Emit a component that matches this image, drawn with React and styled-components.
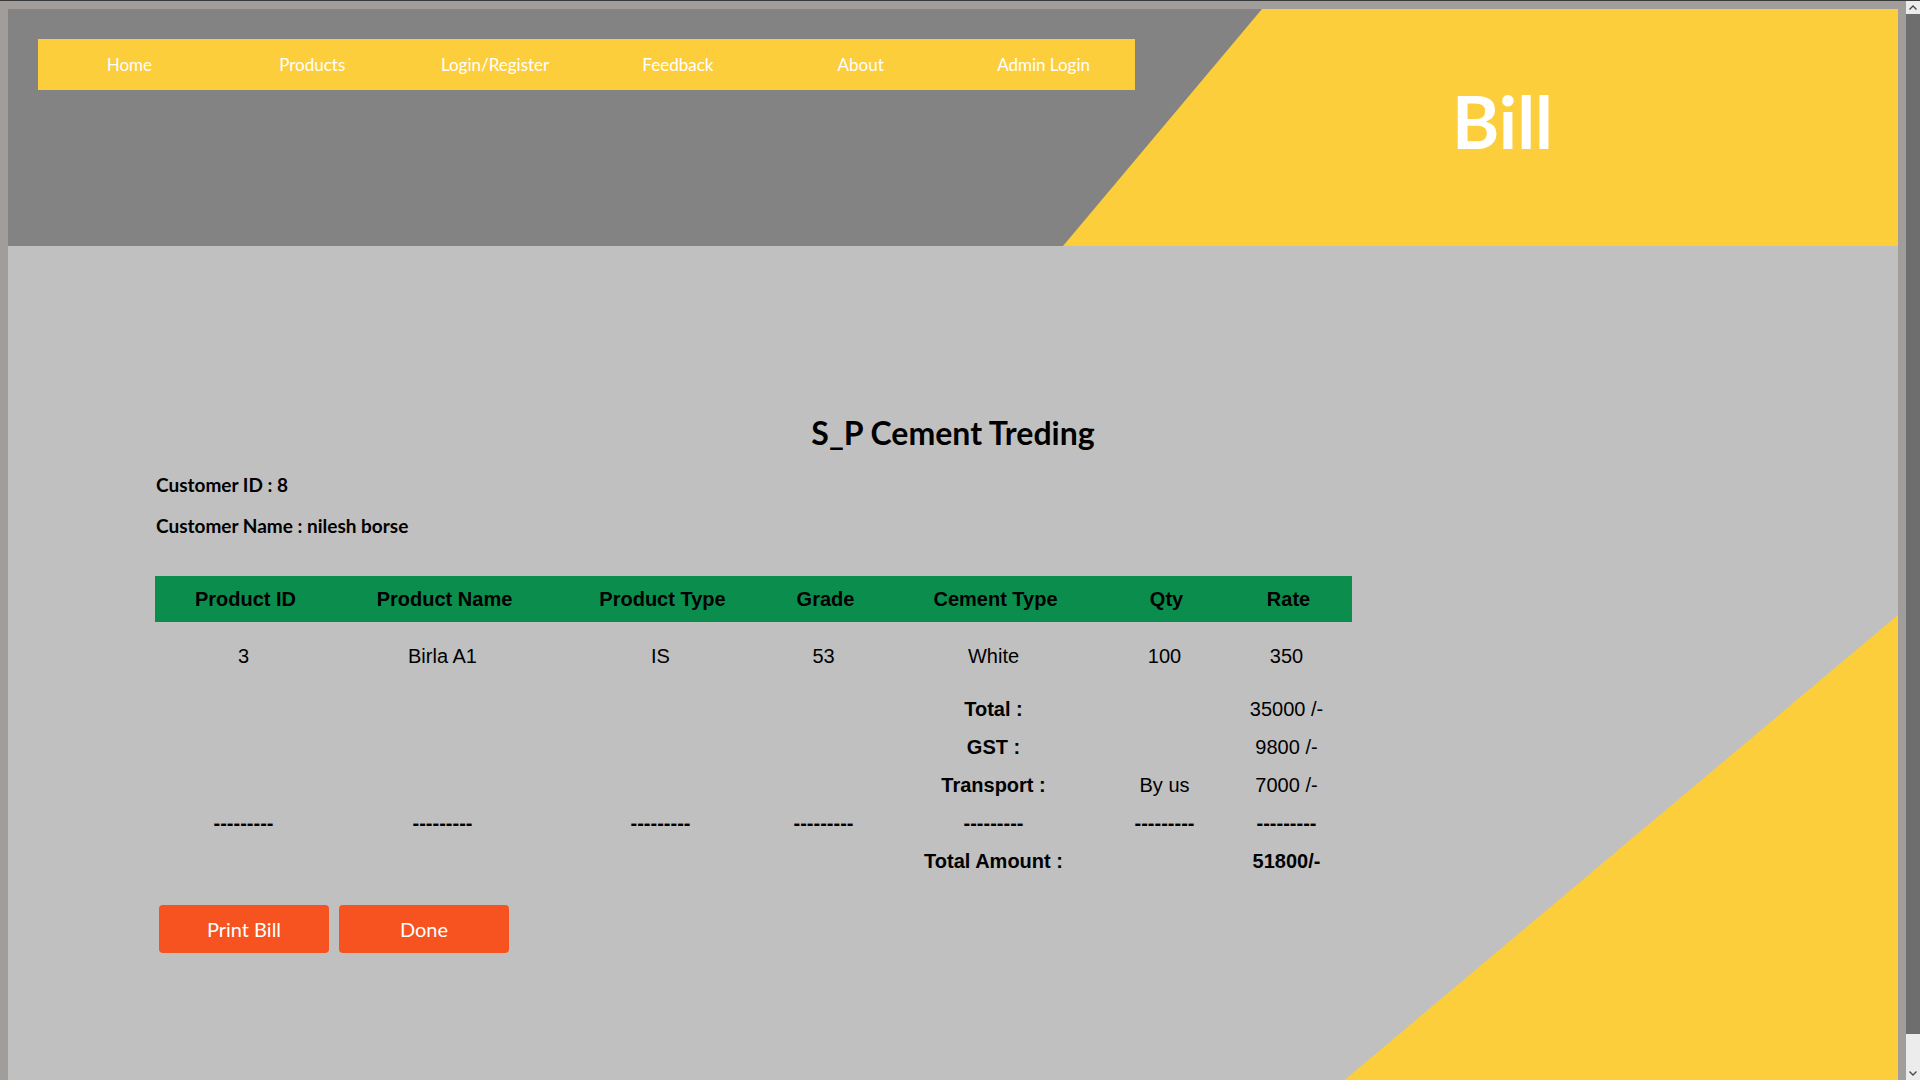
import React from 'react';
import styled, { createGlobalStyle } from 'styled-components';

const GlobalStyle = createGlobalStyle`
  html {
    background: #a09d9a;
    border-top: 1px solid #3a3a3a;
  }
  body {
    margin: 8px 22px 8px 8px;
    font-family: Lato, "Open Sans", sans-serif;
  }
`;

/* browser scrollbar, drawn over the right edge */
const ScrollBar = styled.div`
  position: fixed;
  top: 1px;
  right: 0;
  bottom: 0;
  width: 14px;
  display: flex;
  flex-direction: column;
  background: #ececec;
  z-index: 10;
`;

const ScrollArrow = styled.div`
  flex: 0 0 13px;
  display: flex;
  align-items: center;
  justify-content: center;
`;

const ScrollThumb = styled.div`
  flex: 0 0 1020px;
  background: #6e6e6e;
`;

const ScrollTrack = styled.div`
  flex: 1;
`;

const Header = styled.header`
  position: relative;
  display: flex;
  align-items: flex-start;
  height: 237px;
  background: #838383;
  overflow: hidden;

  &::before {
    content: '';
    position: absolute;
    top: 0;
    right: 0;
    bottom: 0;
    width: 835px;
    background: #fdce3b;
    clip-path: polygon(199px 0, 100% 0, 100% 100%, 0 100%);
  }
`;

const Nav = styled.nav`
  position: relative;
  z-index: 1;
  display: flex;
  flex: 0 0 1097px;
  height: 51px;
  margin: 30px;
  background: #fdce3b;
`;

const NavLink = styled.a`
  flex: 1;
  display: flex;
  align-items: center;
  justify-content: center;
  color: #fff;
  font-size: 17px;
  text-decoration: none;
`;

const TitleWrap = styled.div`
  position: relative;
  z-index: 1;
  flex: 1;
  text-align: center;
  padding-right: 58px;
`;

const PageTitle = styled.h1`
  margin: 69px 0 0;
  color: #fff;
  font-size: 72px;
  font-weight: 700;
  line-height: 1.2;
`;

const Main = styled.main`
  position: relative;
  min-height: 858px;
  box-sizing: border-box;
  padding-top: 168px;
  background: #c0c0c0;
  overflow: hidden;

  &::after {
    content: '';
    position: absolute;
    right: 0;
    bottom: 0;
    width: 582px;
    height: 489px;
    background: #fdce3b;
    clip-path: polygon(100% 0, 100% 100%, 0 100%);
  }
`;

const Company = styled.h2`
  margin: 0;
  text-align: center;
  font-size: 32px;
  font-weight: 700;
  line-height: 38px;
  color: #000;
`;

const Details = styled.div`
  position: relative;
  z-index: 1;
  padding-left: 147px;
`;

const InfoLine = styled.p`
  margin: ${(p) => p.$top}px 0 0 1px;
  font-size: 19px;
  font-weight: 700;
  line-height: 23px;
  color: #000;
`;

const BillTable = styled.table`
  width: 1197px;
  margin-top: 39px;
  border-collapse: collapse;
  table-layout: fixed;
  font-family: "Liberation Sans", Arial, sans-serif;
  font-size: 20px;
  color: #000;
`;

const HeadRow = styled.tr`
  height: 46px;
  background: #0b8d4e;
`;

const Th = styled.th`
  padding: 0 0 0 4px;
  font-weight: 700;
  text-align: center;
`;

const Row = styled.tr`
  height: ${(p) => p.$h || 38}px;
`;

const Td = styled.td`
  padding: 0;
  text-align: center;
  font-weight: ${(p) => (p.$bold ? 700 : 400)};
`;

const Actions = styled.div`
  display: flex;
  gap: 10px;
  margin-top: 25px;
  padding-left: 4px;
`;

const Button = styled.button`
  width: 170px;
  height: 48px;
  border: none;
  border-radius: 4px;
  background: #f65321;
  color: #fff;
  font-family: Lato, sans-serif;
  font-size: 20px;
`;

const Chevron = ({ up }) => (
  <svg width="8" height="5" viewBox="0 0 8 5">
    <path
      d={up ? 'M0.5 4.5 L4 1 L7.5 4.5' : 'M0.5 0.5 L4 4 L7.5 0.5'}
      fill="none"
      stroke="#4a4a4a"
      strokeWidth="1.4"
    />
  </svg>
);

const navItems = ['Home', 'Products', 'Login/Register', 'Feedback', 'About', 'Admin Login'];
const columns = [
  ['Product ID', 177],
  ['Product Name', 221],
  ['Product Type', 215],
  ['Grade', 111],
  ['Cement Type', 229],
  ['Qty', 113],
  ['Rate', 131],
];
const dash = '---------';

export default function App() {
  return (
    <>
      <GlobalStyle />
      <ScrollBar>
        <ScrollArrow><Chevron up /></ScrollArrow>
        <ScrollThumb />
        <ScrollTrack />
        <ScrollArrow><Chevron /></ScrollArrow>
      </ScrollBar>

      <Header>
        <Nav>
          {navItems.map((item) => (
            <NavLink key={item} href="#">{item}</NavLink>
          ))}
        </Nav>
        <TitleWrap>
          <PageTitle>Bill</PageTitle>
        </TitleWrap>
      </Header>

      <Main>
        <Company>S_P Cement Treding</Company>
        <Details>
          <InfoLine $top={21}>Customer ID : 8</InfoLine>
          <InfoLine $top={18}>Customer Name : nilesh borse</InfoLine>

          <BillTable>
            <colgroup>
              {columns.map(([name, w]) => (
                <col key={name} style={{ width: w }} />
              ))}
            </colgroup>
            <thead>
              <HeadRow>
                {columns.map(([name]) => (
                  <Th key={name}>{name}</Th>
                ))}
              </HeadRow>
            </thead>
            <tbody>
              <Row $h={68}>
                <Td>3</Td>
                <Td>Birla A1</Td>
                <Td>IS</Td>
                <Td>53</Td>
                <Td>White</Td>
                <Td>100</Td>
                <Td>350</Td>
              </Row>
              <Row>
                <Td /><Td /><Td /><Td />
                <Td $bold>Total :</Td>
                <Td />
                <Td>35000 /-</Td>
              </Row>
              <Row>
                <Td /><Td /><Td /><Td />
                <Td $bold>GST :</Td>
                <Td />
                <Td>9800 /-</Td>
              </Row>
              <Row>
                <Td /><Td /><Td /><Td />
                <Td $bold>Transport :</Td>
                <Td>By us</Td>
                <Td>7000 /-</Td>
              </Row>
              <Row>
                {columns.map(([name]) => (
                  <Td key={name} $bold>{dash}</Td>
                ))}
              </Row>
              <Row>
                <Td /><Td /><Td /><Td />
                <Td $bold>Total Amount :</Td>
                <Td />
                <Td $bold>51800/-</Td>
              </Row>
            </tbody>
          </BillTable>

          <Actions>
            <Button>Print Bill</Button>
            <Button>Done</Button>
          </Actions>
        </Details>
      </Main>
    </>
  );
}
